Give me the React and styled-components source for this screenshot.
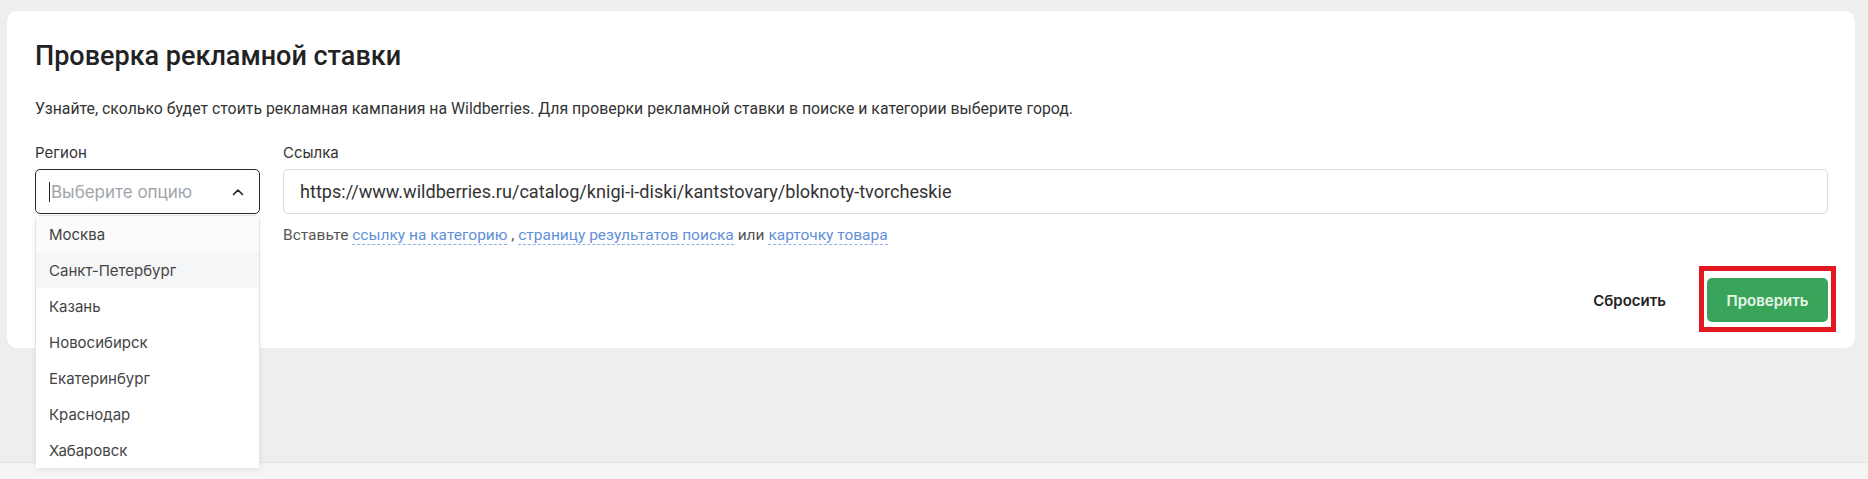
import React from "react";
import styled, { createGlobalStyle } from "styled-components";

const Global = createGlobalStyle`
  html, body { margin: 0; padding: 0; }
  body { background: #eeeeee; font-family: Roboto, "Liberation Sans", sans-serif; }
  * { box-sizing: border-box; }
`;

const Page = styled.div`
  height: 479px;
  display: flex;
  flex-direction: column;
  overflow: hidden;
`;

const Main = styled.main`
  flex: 1;
  padding: 11px 13px 0 7px;
`;

const Footer = styled.footer`
  height: 17px;
  border-top: 1px solid #e2e2e2;
  background: #f5f5f5;
`;

const Card = styled.section`
  background: #ffffff;
  border-radius: 10px;
  padding: 28px 27px 26px 28px;
`;

const Title = styled.h1`
  margin: 0;
  font-family: Roboto, "Liberation Sans", sans-serif;
  font-weight: 500;
  font-size: 27px;
  line-height: 34px;
  color: #222222;
`;

const Description = styled.p`
  margin: 26px 0 0;
  font-family: Roboto, "Liberation Sans", sans-serif;
  font-size: 15.85px;
  line-height: 20px;
  color: #333333;
`;

const Fields = styled.div`
  margin-top: 24px;
  display: flex;
  gap: 23px;
  align-items: flex-start;
`;

const Field = styled.div`
  display: flex;
  flex-direction: column;
  gap: 6px;
  width: ${(p) => p.$width || "auto"};
  flex: ${(p) => (p.$grow ? 1 : "none")};
`;

const Label = styled.label`
  font-family: Inter, "Noto Sans", sans-serif;
  font-size: 15px;
  line-height: 20px;
  color: #333333;
`;

const SelectWrap = styled.div`
  position: relative;
`;

const SelectBox = styled.div`
  height: 45px;
  border: 1px solid #2b2b2b;
  border-radius: 5px;
  padding: 0 15px 0 13px;
  display: flex;
  align-items: center;
  justify-content: space-between;
  background: #fff;
`;

const Placeholder = styled.span`
  display: flex;
  align-items: center;
  font-family: Inter, "Noto Sans", sans-serif;
  font-size: 17px;
  color: #a0a4aa;
`;

const Caret = styled.span`
  width: 1px;
  height: 20px;
  background: #222;
  margin-right: 1px;
`;

const Menu = styled.ul`
  position: absolute;
  top: calc(100% + 1px);
  left: 0;
  right: 0;
  margin: 0;
  padding: 0;
  list-style: none;
  background: #fff;
  border: 1px solid #e4e4e4;
  border-radius: 5px;
  box-shadow: 0 2px 6px rgba(0, 0, 0, 0.06);
  z-index: 10;
`;

const Option = styled.li`
  height: 36px;
  display: flex;
  align-items: center;
  padding-left: 13px;
  font-family: Inter, "Noto Sans", sans-serif;
  font-size: 15px;
  color: #444444;
  background: ${(p) => (p.$hover ? "#f5f6f7" : p.$first ? "#fbfbfc" : "#fff")};
`;

const TextInput = styled.div`
  height: 45px;
  border: 1px solid #dcdcdc;
  border-radius: 5px;
  padding: 0 16px;
  display: flex;
  align-items: center;
  font-family: Roboto, "Liberation Sans", sans-serif;
  font-size: 18.1px;
  color: #333333;
`;

const Hint = styled.div`
  margin-top: 5px;
  font-family: Roboto, "Liberation Sans", sans-serif;
  font-size: 15.5px;
  line-height: 20px;
  color: #555555;
`;

const HintLink = styled.a`
  color: #5f8fd8;
  text-decoration: none;
  border-bottom: 1px dashed #8fb0e4;
`;

const Actions = styled.div`
  margin-top: 33px;
  display: flex;
  justify-content: flex-end;
  align-items: center;
  gap: 21px;
`;

const GhostButton = styled.button`
  height: 44px;
  padding: 0 20px;
  border: none;
  background: transparent;
  font-family: Inter, "Noto Sans", sans-serif;
  font-weight: 600;
  font-size: 15px;
  color: #222222;
`;

const Highlight = styled.div`
  position: relative;
`;

const Frame = styled.span`
  position: absolute;
  top: -12px;
  bottom: -10px;
  left: -8px;
  right: -8px;
  border: 5px solid #e3171f;
  pointer-events: none;
`;

const PrimaryButton = styled.button`
  height: 44px;
  width: 121px;
  border: none;
  border-radius: 5px;
  background: #39a55b;
  font-family: Inter, "Noto Sans", sans-serif;
  font-weight: 600;
  font-size: 15px;
  color: #e8f6ec;
`;

const Chevron = () => (
  <svg width="12" height="8" viewBox="0 0 12 8" fill="none">
    <path d="M1.5 6.5L6 2L10.5 6.5" stroke="#222" strokeWidth="1.6" strokeLinecap="round" strokeLinejoin="round" />
  </svg>
);

const cities = ["Москва", "Санкт-Петербург", "Казань", "Новосибирск", "Екатеринбург", "Краснодар", "Хабаровск"];

export default function App() {
  return (
    <>
      <Global />
      <Page>
        <Main>
          <Card>
            <Title>Проверка рекламной ставки</Title>
            <Description>
              Узнайте, сколько будет стоить рекламная кампания на Wildberries. Для проверки рекламной ставки в поиске и категории выберите город.
            </Description>
            <Fields>
              <Field $width="225px">
                <Label>Регион</Label>
                <SelectWrap>
                  <SelectBox>
                    <Placeholder>
                      <Caret />
                      Выберите опцию
                    </Placeholder>
                    <Chevron />
                  </SelectBox>
                  <Menu>
                    {cities.map((c, i) => (
                      <Option key={c} $first={i === 0} $hover={i === 1}>
                        {c}
                      </Option>
                    ))}
                  </Menu>
                </SelectWrap>
              </Field>
              <Field $grow>
                <Label>Ссылка</Label>
                <TextInput>https://www.wildberries.ru/catalog/knigi-i-diski/kantstovary/bloknoty-tvorcheskie</TextInput>
                <Hint>
                  Вставьте <HintLink>ссылку на категорию</HintLink> , <HintLink>страницу результатов поиска</HintLink> или{" "}
                  <HintLink>карточку товара</HintLink>
                </Hint>
              </Field>
            </Fields>
            <Actions>
              <GhostButton>Сбросить</GhostButton>
              <Highlight>
                <PrimaryButton>Проверить</PrimaryButton>
                <Frame />
              </Highlight>
            </Actions>
          </Card>
        </Main>
        <Footer />
      </Page>
    </>
  );
}
